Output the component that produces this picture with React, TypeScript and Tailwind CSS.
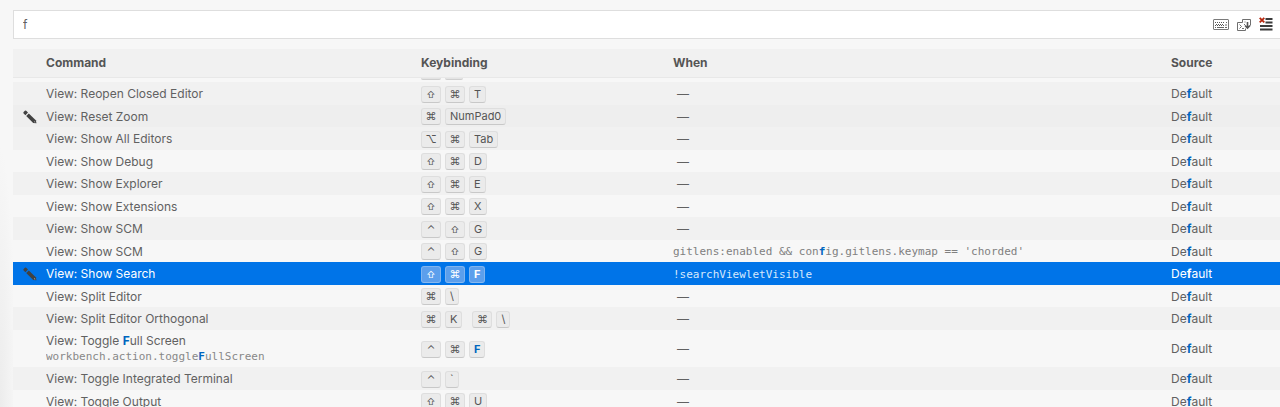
import { useState } from 'react';
import clsx from 'clsx';

// ---------------------------------------------------------------------------
// Types
// ---------------------------------------------------------------------------

interface Keybinding {
  command: string;
  commandId?: string;
  // Each chord is a list of keys pressed together
  chords: string[][];
  when?: string;
  hovered?: boolean;
  selected?: boolean;
}

// ---------------------------------------------------------------------------
// Data
// ---------------------------------------------------------------------------

const KEYBINDINGS: Keybinding[] = [
  { command: 'View: Reopen Closed Editor', chords: [['⇧', '⌘', 'T']] },
  { command: 'View: Reset Zoom', chords: [['⌘', 'NumPad0']], hovered: true },
  { command: 'View: Show All Editors', chords: [['⌥', '⌘', 'Tab']] },
  { command: 'View: Show Debug', chords: [['⇧', '⌘', 'D']] },
  { command: 'View: Show Explorer', chords: [['⇧', '⌘', 'E']] },
  { command: 'View: Show Extensions', chords: [['⇧', '⌘', 'X']] },
  { command: 'View: Show SCM', chords: [['⌃', '⇧', 'G']] },
  {
    command: 'View: Show SCM',
    chords: [['⌃', '⇧', 'G']],
    when: "gitlens:enabled && con[f]ig.gitlens.keymap == 'chorded'",
  },
  {
    command: 'View: Show Search',
    chords: [['⇧', '⌘', '[F]']],
    when: '!searchViewletVisible',
    selected: true,
  },
  { command: 'View: Split Editor', chords: [['⌘', '\\']] },
  {
    command: 'View: Split Editor Orthogonal',
    chords: [
      ['⌘', 'K'],
      ['⌘', '\\'],
    ],
  },
  {
    command: 'View: Toggle [F]ull Screen',
    commandId: 'workbench.action.toggle[F]ullScreen',
    chords: [['⌃', '⌘', '[F]']],
  },
  { command: 'View: Toggle Integrated Terminal', chords: [['⌃', '`']] },
  { command: 'View: Toggle Output', chords: [['⇧', '⌘', 'U']] },
];

// ---------------------------------------------------------------------------
// Icons
// ---------------------------------------------------------------------------

function PencilIcon() {
  return (
    <svg className="h-[14px] w-[14px]" viewBox="0 0 14 14" fill="#424242">
      <path d="M3.2 0.8 5 2.6 2.4 5.2 0.6 3.4Q0 2.7 0.6 2.1L1.9 0.8Q2.5 0.2 3.2 0.8Z" />
      <path d="M5.8 3.4 12.8 10.3 13.5 13.3 10.2 12.9 3.2 6Z" />
      <path d="M11.9 11.2 12.3 12.4 11 12.1Z" fill="#e8e8e8" />
    </svg>
  );
}

function KeyboardIcon() {
  return (
    <svg className="h-3 w-4" viewBox="0 0 16 12" fill="none" stroke="#7a7a7a">
      <rect x="0.5" y="0.5" width="15" height="10" rx="0.5" />
      <path d="M2 3.5H12M3 5.5H11M2 6.5H11" strokeDasharray="1 1" stroke="#555" />
      <path d="M2 8.5H3M4 8.5H11M12 8.5H14M13.5 3V4M12 6H14" stroke="#666" />
    </svg>
  );
}

function PrecedenceIcon() {
  return (
    <svg className="h-[14px] w-[14px]" viewBox="0 0 14 14" fill="none" stroke="#6f6f6f">
      <path d="M5.5 4.5V1.5H13.5V7.5M5.5 4.5H0.5V12.5H8.5V10.5" />
      <path d="M2.5 6.5 4.5 8.5 2.5 10.5M5 10.5H7M7.5 4H8.5M7 6.5H8" />
      <path d="M10.5 4V10M8 7.5 10.5 10 13 7.5" strokeWidth="1.6" stroke="#555" />
    </svg>
  );
}

function ClearIcon() {
  return (
    <svg className="h-[15px] w-[14px]" viewBox="0 0 14 15" fill="none">
      <path d="M6.5 2H13.5M6.5 5.5H13.5M1 9H13.5M1 12.5H13.5" stroke="#3b3b3b" strokeWidth="1.8" />
      <path d="M0.7 0.8 5.3 5.4M5.3 0.8 0.7 5.4" stroke="#b5260d" strokeWidth="1.8" />
    </svg>
  );
}

// ---------------------------------------------------------------------------
// Cells
// ---------------------------------------------------------------------------

// Renders the part in [brackets] as a search match
function Highlight({ text, selected }: { text: string; selected?: boolean }) {
  return (
    <>
      {text.split(/[[\]]/).map((part, i) =>
        i % 2 === 1 ? (
          <b key={i} className={clsx('font-bold', selected ? 'text-white' : 'text-[#0066bf]')}>
            {part}
          </b>
        ) : (
          part
        ),
      )}
    </>
  );
}

function Key({ label, selected }: { label: string; selected?: boolean }) {
  return (
    <kbd
      className={clsx(
        'flex h-[17px] items-center justify-center rounded-[3px] border px-1 font-[Inter,sans-serif] leading-none',
        /[⇧⌘⌥⌃]/.test(label) && 'w-5',
        label === '⇧' ? 'text-[9px]' : 'text-[11px]',
        selected
          ? 'border-[#80b4ee] border-b-[#8ab9ee] bg-[#5c9fec] text-white'
          : 'border-[#dedede] border-b-[#c8c8c8] bg-[#ebebeb] text-[#555]',
      )}
    >
      <Highlight text={label} selected={selected} />
    </kbd>
  );
}

function Chords({ chords, selected }: { chords: string[][]; selected?: boolean }) {
  return (
    <div className="flex gap-[10px]">
      {chords.map((keys, i) => (
        <div key={i} className="flex gap-1">
          {keys.map((key) => (
            <Key key={key} label={key} selected={selected} />
          ))}
        </div>
      ))}
    </div>
  );
}

function Row({ item }: { item: Keybinding }) {
  const { command, commandId, chords, when, hovered, selected } = item;

  return (
    <tr
      className={clsx(
        commandId ? 'h-[37px]' : 'h-[22px] odd:h-[23px]',
        selected && 'bg-[#0074e8] text-white',
        hovered && 'bg-[#eeeeee]',
        !selected && !hovered && 'bg-[#f7f7f7] odd:bg-[#f1f1f1]',
      )}
    >
      <td className="p-0 pl-[10px] pt-[2px]">
        {(hovered || selected) && (
          <button type="button" aria-label="Change keybinding" className="block">
            <PencilIcon />
          </button>
        )}
      </td>
      <td className="truncate p-0 pt-[2px] leading-4">
        <Highlight text={command} />
        {commandId && (
          <div className="font-['DejaVu_Sans_Mono',monospace] text-[11px] text-[#888]">
            <Highlight text={commandId} />
          </div>
        )}
      </td>
      <td className="p-0 pt-[2px]">
        <Chords chords={chords} selected={selected} />
      </td>
      <td className="truncate p-0 pt-[2px] leading-4">
        {when ? (
          <code
            className={clsx(
              "font-['DejaVu_Sans_Mono',monospace] text-[11px]",
              selected ? 'text-[#d6e8fc]' : 'text-[#808080]',
            )}
          >
            <Highlight text={when} />
          </code>
        ) : (
          <span className="pl-1">—</span>
        )}
      </td>
      <td className="p-0 pt-[2px] leading-4">
        <Highlight text="De[f]ault" selected={selected} />
      </td>
    </tr>
  );
}

// ---------------------------------------------------------------------------
// Main export
// ---------------------------------------------------------------------------

export default function App() {
  const [query, setQuery] = useState('f');

  return (
    <div className="h-screen overflow-hidden bg-[#f7f7f7] bg-[radial-gradient(16px_260px_at_0_100%,#ececec,#f7f7f7)] pl-[13px] pt-[10px] font-[Inter,sans-serif] text-[12px] text-[#616161]">
      {/* Search */}
      <div className="flex h-[29px] items-center border border-r-0 border-[#dedede] bg-white pr-[7px]">
        <input
          type="text"
          aria-label="Search keybindings"
          value={query}
          onChange={(e) => setQuery(e.target.value)}
          className="min-w-0 flex-1 bg-transparent px-[9px] outline-none"
        />
        <div className="flex items-center gap-2">
          <button type="button" aria-label="Record keys">
            <KeyboardIcon />
          </button>
          <button type="button" aria-label="Sort by precedence">
            <PrecedenceIcon />
          </button>
          <button type="button" aria-label="Clear search">
            <ClearIcon />
          </button>
        </div>
      </div>

      {/* Keybindings */}
      <table className="mt-[10px] w-full table-fixed border-collapse text-left">
        <thead>
          <tr className="h-[28px] border-b border-[#e8e8e8] bg-[#f1f1f1] text-[#555]">
            <th className="w-[33px] p-0" />
            <th className="w-[375px] p-0 font-bold">Command</th>
            <th className="w-[252px] p-0 font-bold">Keybinding</th>
            <th className="p-0 font-bold">When</th>
            <th className="w-[109px] p-0 font-bold">Source</th>
          </tr>
        </thead>
        {/* Row scrolled under the header, only its lower edge shows */}
        <tbody aria-hidden="true">
          <tr>
            <td />
            <td />
            <td className="p-0">
              <div className="flex h-1 gap-1">
                <span className="h-[2px] w-5 rounded-b-[3px] border-b border-[#cfcfcf] bg-[#e4e4e4]" />
                <span className="h-[2px] w-[18px] rounded-b-[3px] border-b border-[#cfcfcf] bg-[#e4e4e4]" />
              </div>
            </td>
            <td />
            <td />
          </tr>
        </tbody>
        <tbody>
          {KEYBINDINGS.map((item, i) => (
            <Row key={i} item={item} />
          ))}
        </tbody>
      </table>
    </div>
  );
}
